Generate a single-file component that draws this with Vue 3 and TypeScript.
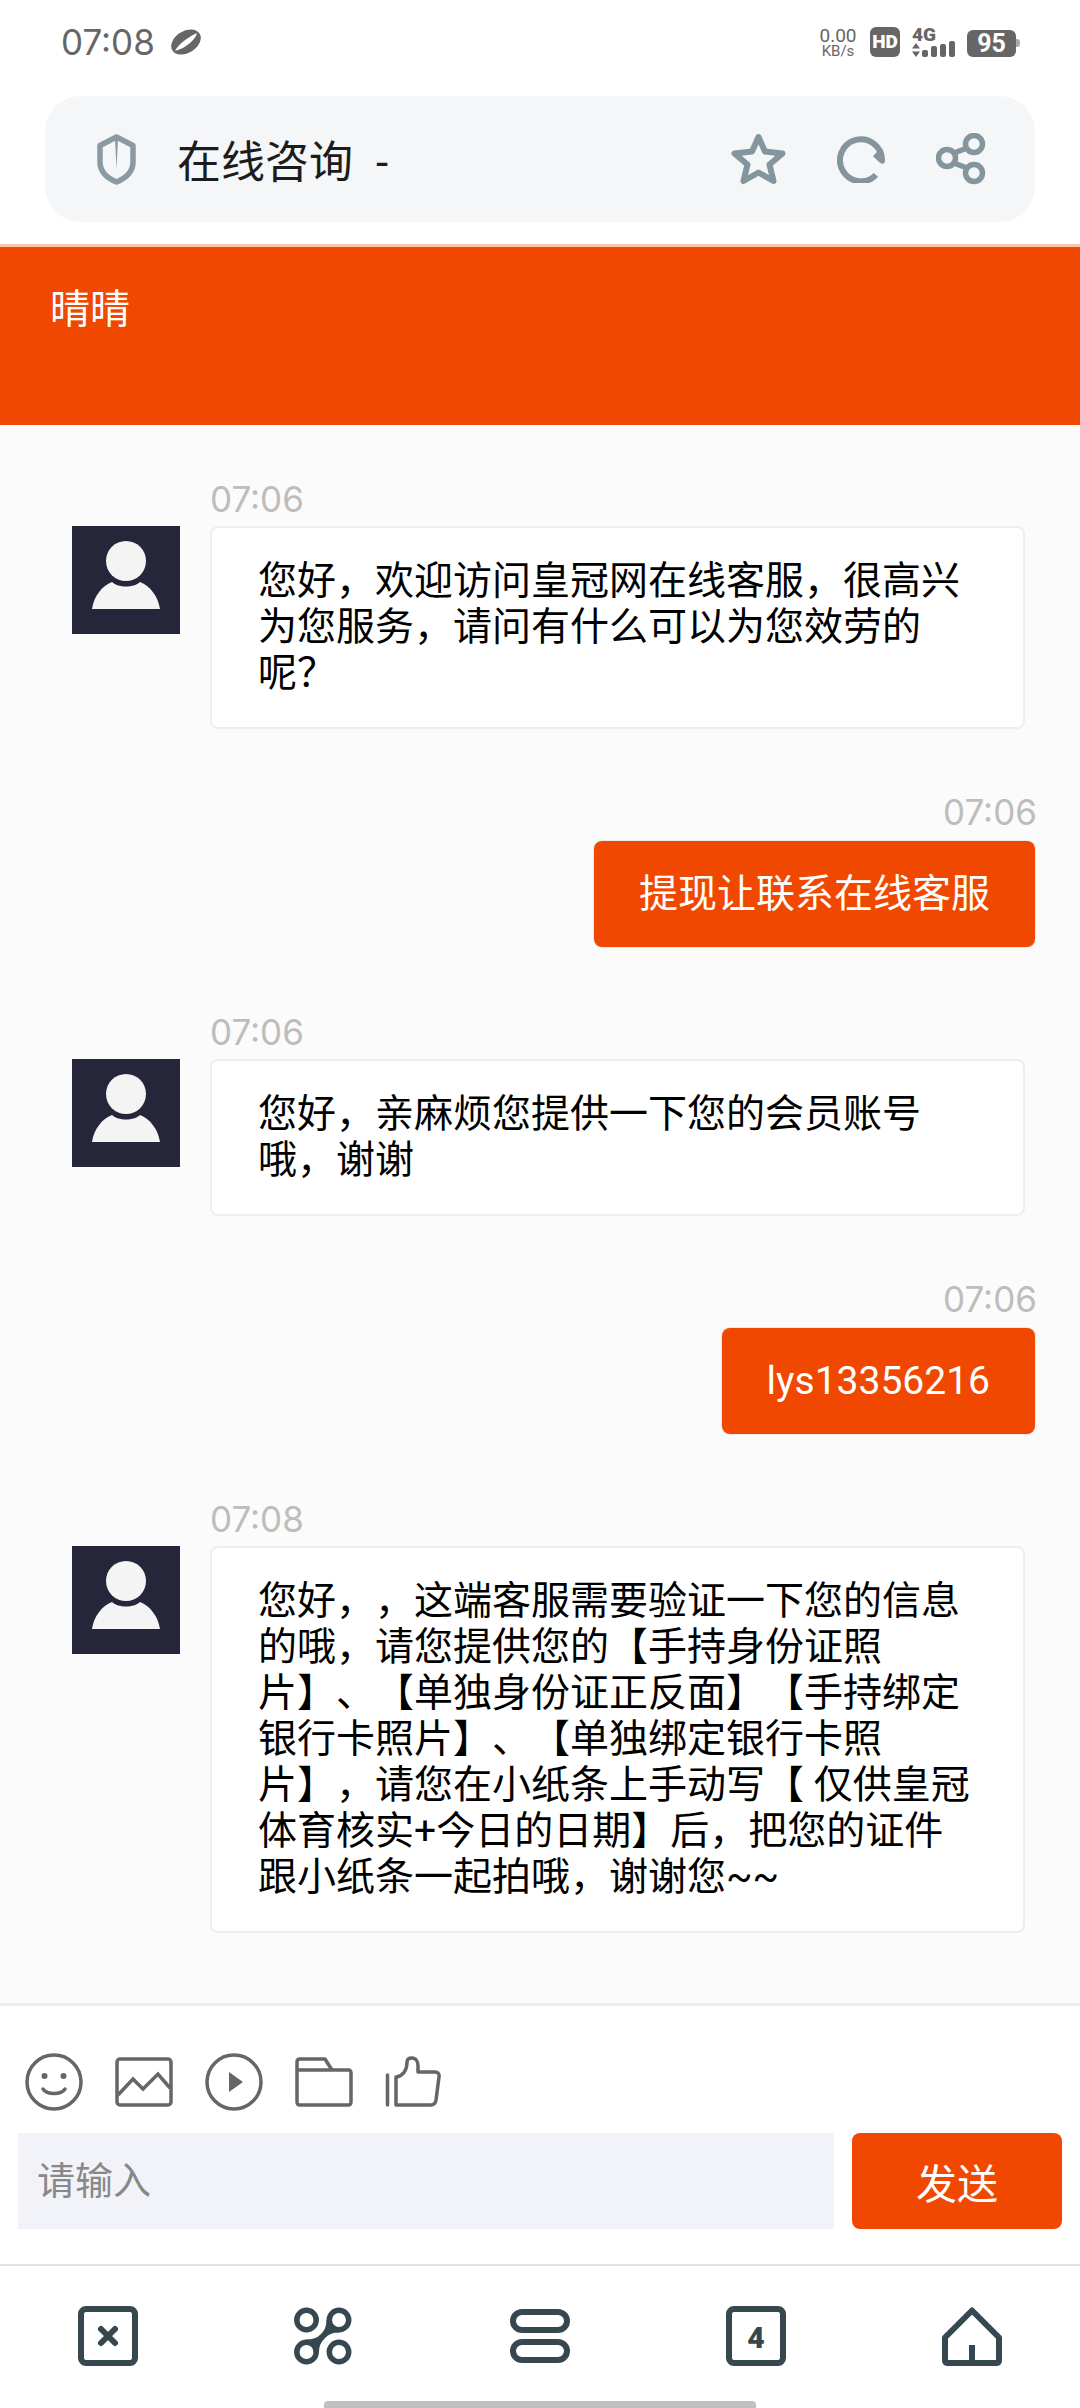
<script setup lang="ts">
interface Msg { side: 'l' | 'r'; time: string; text: string }
const messages: Msg[] = [
  { side: 'l', time: '07:06', text: '您好，欢迎访问皇冠网在线客服，很高兴为您服务，请问有什么可以为您效劳的呢？' },
  { side: 'r', time: '07:06', text: '提现让联系在线客服' },
  { side: 'l', time: '07:06', text: '您好，亲麻烦您提供一下您的会员账号哦，谢谢' },
  { side: 'r', time: '07:06', text: 'lys13356216' },
  { side: 'l', time: '07:08', text: '您好，，这端客服需要验证一下您的信息的哦，请您提供您的【手持身份证照片】、【单独身份证正反面】【手持绑定银行卡照片】、【单独绑定银行卡照片】，请您在小纸条上手动写【 仅供皇冠体育核实+今日的日期】后，把您的证件跟小纸条一起拍哦，谢谢您~~' }
]
const bars: number[] = [7, 11, 13, 16]
</script>

<template>
  <div class="page">
    <div class="status">
      <span class="clock">07:08</span>
      <svg class="planet" width="30" height="26" viewBox="0 0 30 26">
        <g transform="rotate(-32 15 13)">
          <ellipse cx="15" cy="13" rx="16" ry="11" fill="#666" />
          <path d="M1 14.500C8 17.500 22 17.500 29 11.500 24 10 8 10.500 1 14.500Z" fill="#fff" />
        </g>
      </svg>
      <div class="status-right">
        <div class="speed"><span class="rate">0.00</span><span class="kbs">KB/s</span></div>
        <div class="hd">HD</div>
        <div class="net">
          <span class="g4">4G</span>
          <div class="net-row">
            <svg class="arrows" width="8" height="14" viewBox="0 0 8 14"><path d="M4 0 8 5.500H0ZM0 8.500h8L4 14Z" fill="#666" /></svg>
            <span v-for="b in bars" :key="b" class="bar" :style="{ height: b + 'px' }"></span>
          </div>
        </div>
        <div class="battery"><span>95</span></div>
        <div class="nub"></div>
      </div>
    </div>

    <div class="urlbar">
      <svg class="shield" width="39" height="51" viewBox="0 0 39 51">
        <path d="M19.5 3 36 11.5V28C36 38 28 44.500 19.500 48 11 44.500 3 38 3 28V11.500Z" fill="none" stroke="#8a9aa3" stroke-width="5.500" stroke-linejoin="round" />
        <path d="M18 5h3l-1.500 30Z" fill="#8a9aa3" />
      </svg>
      <span class="title">在线咨询 -</span>
      <div class="url-actions">
        <svg width="55" height="52" viewBox="0 0 55 52">
          <path d="M27.500 4 34 18.500 51.500 20.500 38.500 31.500 42.500 48 27.500 39.500 12.500 48 16.500 31.500 3.500 20.500 21 18.500Z" fill="none" stroke="#84959e" stroke-width="6" stroke-linejoin="round" />
        </svg>
        <svg width="48" height="48" viewBox="0 0 48 48">
          <path d="M39 40A21 21 0 1 1 45 25.700L38 19" fill="none" stroke="#84959e" stroke-width="6" stroke-linejoin="round" />
        </svg>
        <svg width="50" height="52" viewBox="0 0 50 52">
          <g fill="none" stroke="#84959e" stroke-width="5.500">
            <circle cx="11" cy="25" r="8.500" />
            <circle cx="38" cy="11" r="8.500" />
            <circle cx="38" cy="40" r="8.500" />
            <path d="M18 20 31 15M18 30 31 35" />
          </g>
        </svg>
      </div>
    </div>

    <div class="hairline"></div>
    <header class="head">晴晴</header>

    <main class="chat">
      <div v-for="(m, i) in messages" :key="i" class="msg" :class="m.side === 'l' ? 'msg-left' : 'msg-right'">
        <div v-if="m.side === 'l'" class="avatar">
          <svg width="108" height="108" viewBox="0 0 108 108">
            <circle cx="54" cy="35" r="20" fill="#f4f4f4" />
            <path d="M20 83C22 70 30 60 40 56 46 62 62 62 68 56 78 60 86 70 88 83Z" fill="#f4f4f4" />
          </svg>
        </div>
        <div class="msg-col">
          <div class="time">{{ m.time }}</div>
          <div class="bubble">{{ m.text }}</div>
        </div>
      </div>
    </main>

    <section class="composer">
      <div class="tools">
        <svg width="58" height="58" viewBox="0 0 58 58">
          <circle cx="29" cy="29" r="27" fill="none" stroke="#666" stroke-width="3.500" />
          <circle cx="19.500" cy="23" r="3" fill="#666" /><circle cx="38.500" cy="23" r="3" fill="#666" />
          <path d="M18 36C22 42 36 42 40 36" fill="none" stroke="#666" stroke-width="3.500" stroke-linecap="round" />
        </svg>
        <svg width="58" height="50" viewBox="0 0 58 50">
          <rect x="2" y="2" width="54" height="46" rx="3" fill="none" stroke="#666" stroke-width="3.500" />
          <path d="M3 38 18 22 28 32 43 17 55 31" fill="none" stroke="#666" stroke-width="3.500" />
        </svg>
        <svg width="58" height="58" viewBox="0 0 58 58">
          <circle cx="29" cy="29" r="27" fill="none" stroke="#666" stroke-width="3.500" />
          <path d="M24 19 38 29 24 39Z" fill="#666" />
        </svg>
        <svg width="58" height="50" viewBox="0 0 58 50">
          <path d="M2 13V5Q2 2 5 2H30L37 13H53Q56 13 56 16V45Q56 48 53 48H5Q2 48 2 45ZM2 13H37" fill="none" stroke="#666" stroke-width="3.500" stroke-linejoin="round" />
        </svg>
        <svg width="56" height="51" viewBox="0 0 56 51">
          <path d="M2.500 19V49" fill="none" stroke="#666" stroke-width="3.500" stroke-linecap="round" />
          <path d="M11 49V21C18 20 22 14 22 6 22 2 25 2 27 2 31 2 33 6 33 10V16H50C53 16 54.500 18 54 21L51 44C50.500 47 49 49 46 49Z" fill="none" stroke="#666" stroke-width="3.500" stroke-linejoin="round" />
        </svg>
      </div>
      <div class="input-row">
        <input class="input" placeholder="请输入" />
        <button class="send">发送</button>
      </div>
    </section>

    <nav class="nav">
      <div class="nav-item">
        <svg width="60" height="60" viewBox="0 0 60 60">
          <rect x="3" y="3" width="54" height="54" rx="5" fill="none" stroke="#37474f" stroke-width="6" />
          <path d="M23 23 37 37M37 23 23 37" stroke="#37474f" stroke-width="6" stroke-linecap="round" />
        </svg>
      </div>
      <div class="nav-item">
        <svg width="60" height="60" viewBox="0 0 60 60">
          <g fill="none" stroke="#37474f" stroke-width="5.500">
            <circle cx="12.500" cy="14" r="9.700" />
            <circle cx="45" cy="14" r="9.700" />
            <circle cx="12.500" cy="46" r="9.700" />
            <circle cx="45" cy="46" r="9.700" />
            <path d="M35.300 14C35.300 24 31 28 29 30 27 32 22.200 36 22.200 46" />
            <path d="M45 23.700C35 23.700 31 28 29 30 27 32 23 36.300 12.500 36.300" />
          </g>
        </svg>
      </div>
      <div class="nav-item">
        <svg width="60" height="60" viewBox="0 0 60 60">
          <g fill="none" stroke="#37474f" stroke-width="6">
            <rect x="3" y="6" width="54" height="18" rx="9" />
            <rect x="3" y="36" width="54" height="18" rx="9" />
          </g>
        </svg>
      </div>
      <div class="nav-item">
        <svg width="60" height="60" viewBox="0 0 60 60">
          <rect x="3" y="3" width="54" height="54" rx="5" fill="none" stroke="#37474f" stroke-width="6" />
          <text x="30" y="41.500" text-anchor="middle" class="tab-count">4</text>
        </svg>
      </div>
      <div class="nav-item">
        <svg width="60" height="60" viewBox="0 0 60 60">
          <path d="M30 4.500 57 31.500V54Q57 57 54 57H6Q3 57 3 54V31.500Z" fill="none" stroke="#37474f" stroke-width="6" stroke-linejoin="round" />
          <path d="M30 39V57" stroke="#37474f" stroke-width="6" />
        </svg>
      </div>
      <div class="home-bar"></div>
    </nav>
  </div>
</template>

<style scoped>
.page {
  position: relative;
  width: 1080px;
  height: 2408px;
  display: flex;
  flex-direction: column;
  overflow: hidden;
  background: #fff;
  font-family: Roboto, "Noto Sans CJK SC", sans-serif;
  text-spacing-trim: space-all;
}
.status {
  height: 96px;
  flex: none;
  display: flex;
  align-items: flex-start;
  padding: 22px 0 0 61px;
  box-sizing: border-box;
  color: #666;
}
.clock {
  font-family: Inter, sans-serif;
  font-size: 35px;
  line-height: 40px;
}
.planet {
  margin: 7px 0 0 16px;
}
.status-right {
  margin-left: auto;
  margin-right: 60px;
  display: flex;
  align-items: flex-start;
  padding-top: 5px;
}
.speed {
  display: flex;
  flex-direction: column;
  align-items: center;
  width: 38px;
  margin-right: 13px;
}
.rate {
  font-size: 19px;
  line-height: 17px;
}
.kbs {
  font-size: 15px;
  line-height: 14px;
}
.hd {
  width: 30px;
  height: 30px;
  border-radius: 6px;
  background: #666;
  color: #fff;
  font-size: 19px;
  font-weight: 900;
  line-height: 30px;
  text-align: center;
  margin-right: 12px;
}
.net {
  width: 44px;
  margin-right: 11px;
  display: flex;
  flex-direction: column;
}
.g4 {
  font-size: 19px;
  line-height: 15px;
  font-weight: 900;
}
.net-row {
  display: flex;
  align-items: flex-end;
  gap: 3px;
  height: 15px;
}
.arrows {
  flex: none;
  margin-right: -1px;
}
.bar {
  width: 6px;
  flex: none;
  border-radius: 2px;
  background: #666;
}
.battery {
  width: 49px;
  height: 27px;
  margin-top: 3px;
  border-radius: 6px;
  background: #666;
  color: #fff;
  font-size: 25px;
  font-weight: 700;
  line-height: 27px;
  text-align: center;
}
.nub {
  width: 4px;
  height: 8px;
  margin-top: 12px;
  border-radius: 0 3px 3px 0;
  background: #aaa;
}
.urlbar {
  flex: none;
  height: 126px;
  margin: 0 45px;
  padding: 0 49px 0 52px;
  display: flex;
  align-items: center;
  border-radius: 36px;
  background: #f4f6f8;
}
.title {
  margin-left: 41px;
  font-size: 44px;
  word-spacing: 12px;
  color: #1c1c1c;
}
.url-actions {
  margin-left: auto;
  display: flex;
  align-items: center;
  gap: 51px;
}
.hairline {
  flex: none;
  height: 3px;
  margin-top: 22px;
  background: #f6c4ab;
}
.head {
  flex: none;
  height: 178px;
  box-sizing: border-box;
  padding: 36px 0 0 50px;
  background: #f04800;
  color: #fff;
  font-size: 40px;
  line-height: 54px;
}
.chat {
  flex: 1;
  min-height: 0;
  padding-top: 54px;
  background: #fbfbfb;
  border-bottom: 3px solid #eeeeee;
}
.msg {
  display: flex;
  margin-bottom: 65px;
}
.msg-left {
  padding-left: 72px;
  gap: 30px;
}
.msg-right {
  justify-content: flex-end;
  padding-right: 45px;
}
.avatar {
  flex: none;
  width: 108px;
  height: 108px;
  margin-top: 47px;
  background: #26263a;
}
.avatar svg {
  display: block;
}
.msg-col {
  display: flex;
  flex-direction: column;
}
.msg-right .msg-col {
  align-items: flex-end;
}
.time {
  height: 47px;
  font-family: Inter, sans-serif;
  font-size: 35px;
  line-height: 40px;
  color: #bdbdbd;
}
.msg-right .time {
  margin-right: -2px;
  line-height: 37px;
}
.bubble {
  box-sizing: border-box;
  border-radius: 8px;
  font-size: 39px;
  line-height: 46px;
}
.msg-left .bubble {
  width: 815px;
  padding: 30px 46px 31px;
  background: #fff;
  border: 2px solid #eeeeee;
  color: #000;
}
.msg-right .bubble {
  padding: 30px 45px;
  background: #f04800;
  color: #fff;
  box-shadow: 0 0 0 1px #f3e9e3;
}
.composer {
  flex: none;
  height: 258px;
  box-sizing: border-box;
  padding: 33px 18px 0;
  display: flex;
  flex-direction: column;
}
.tools {
  height: 85px;
  display: flex;
  align-items: center;
  gap: 32px;
  padding: 0 7px;
  margin-bottom: 9px;
}
.tools svg {
  flex: none;
}
.input-row {
  display: flex;
  gap: 18px;
}
.input {
  width: 816px;
  height: 96px;
  box-sizing: border-box;
  padding: 0 19px;
  border: 0;
  outline: 0;
  background: #f2f3f8;
  font: inherit;
  font-size: 38px;
  color: #333;
}
.input::placeholder {
  color: #888;
  opacity: 1;
}
.send {
  width: 210px;
  height: 96px;
  border: 0;
  border-radius: 8px;
  background: #f04800;
  color: #fff;
  font: inherit;
  font-size: 41px;
}
.nav {
  position: relative;
  flex: none;
  height: 144px;
  box-sizing: border-box;
  border-top: 2px solid #e2e2e2;
  display: grid;
  grid-template-columns: repeat(5, 216px);
  padding-top: 40px;
}
.nav-item {
  display: flex;
  justify-content: center;
  align-items: flex-start;
}
.tab-count {
  font-family: Roboto, sans-serif;
  font-size: 30px;
  font-weight: 900;
  fill: #37474f;
}
.home-bar {
  position: absolute;
  left: 324px;
  bottom: 0;
  width: 432px;
  height: 7px;
  border-radius: 4px 4px 0 0;
  background: #c0c0c0;
}
</style>
